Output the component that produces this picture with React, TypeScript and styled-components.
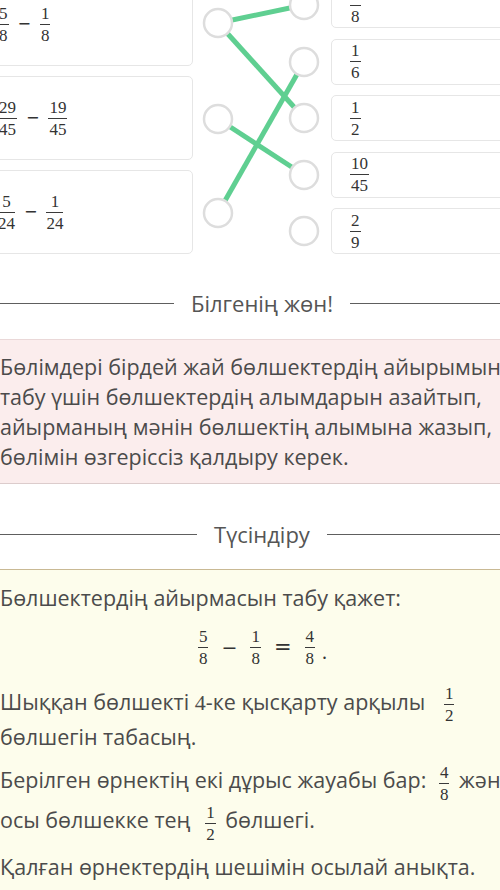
import React from 'react';
import styled, { createGlobalStyle } from 'styled-components';

const GlobalStyle = createGlobalStyle`
  html, body {
    margin: 0;
    padding: 0;
    background: #fff;
    overflow: hidden;
  }
  body {
    font-family: "Open Sans", "Noto Sans", sans-serif;
    color: #4b4b4b;
  }
`;

const Page = styled.div`
  width: 564px;
  margin: -18px 0 0 -20px;
`;

const Matching = styled.div`
  display: grid;
  grid-template-columns: 213px 138px 213px;
`;

const Column = styled.div<{ $gap: number }>`
  display: flex;
  flex-direction: column;
  gap: ${p => p.$gap}px;
`;

const Card = styled.div<{ $h: number; $pad: number }>`
  box-sizing: border-box;
  height: ${p => p.$h}px;
  padding-left: ${p => p.$pad}px;
  display: flex;
  align-items: center;
  gap: 8px;
  background: #fff;
  border: 1px solid #e6e6e6;
  border-radius: 5px;
`;

const FracBox = styled.span`
  display: inline-flex;
  flex-direction: column;
  align-items: center;
  vertical-align: middle;
  font-family: "Liberation Serif", "DejaVu Serif", serif;
  font-size: 17px;
  line-height: 1;
  color: #333;
  padding: 0 1px;
`;

const Num = styled.span<{ $space: number }>`
  padding: 0 1px ${p => p.$space}px;
`;

const Den = styled.span<{ $space: number }>`
  align-self: stretch;
  text-align: center;
  border-top: 1px solid #3a3a3a;
  padding-top: ${p => p.$space}px;
`;

const Op = styled.span<{ $size: number }>`
  font-family: "DejaVu Sans", sans-serif;
  font-size: ${p => p.$size}px;
  line-height: 1;
  color: #333;
`;

const Dot = styled.span`
  font-family: "Liberation Serif", serif;
  font-size: 20px;
  color: #333;
  margin-left: -6px;
  align-self: flex-end;
  line-height: 30px;
`;

function Frac({ n, d, space = 2 }: { n: string; d: string; space?: number }) {
  return (
    <FracBox>
      <Num $space={space}>{n}</Num>
      <Den $space={space}>{d}</Den>
    </FracBox>
  );
}

const Divider = styled.div<{ $mt: number }>`
  display: flex;
  align-items: center;
  gap: 17px;
  margin-top: ${p => p.$mt}px;
  font-size: 22px;
  line-height: 28px;
  color: #555;

  &::before, &::after {
    content: '';
    flex: 1;
    border-top: 1.5px solid #5e5e5e;
  }
`;

const Note = styled.div`
  margin-top: 22px;
  padding: 12px 20px 11px;
  background: #fbeded;
  border-top: 1px solid #ead8d8;
  border-bottom: 1px solid #dccccc;
  font-size: 21.5px;
  line-height: 30px;
  white-space: nowrap;
`;

const Explain = styled.div`
  margin-top: 21px;
  padding: 13px 20px 40px;
  background: #fdfdec;
  border-top: 1px solid #c9b994;
  font-size: 21.5px;
  white-space: nowrap;
`;

const Para = styled.p<{ $lh: number; $mt: number }>`
  margin: ${p => p.$mt}px 0 0;
  line-height: ${p => p.$lh}px;
`;

const Equation = styled.div`
  display: flex;
  justify-content: center;
  align-items: center;
  gap: 12px;
  margin-top: 15px;
  height: 39px;
`;

const MathDigit = styled.span`
  font-family: "Liberation Serif", "DejaVu Serif", serif;
  font-size: 22px;
`;

const InlineFrac = styled.span<{ $ml?: number }>`
  display: inline-block;
  margin: -10px 3px -10px ${p => p.$ml ?? 6}px;
  vertical-align: middle;
`;

const leftItems = [
  ['5', '8', '1', '8'],
  ['29', '45', '19', '45'],
  ['5', '24', '1', '24'],
];

const rightItems = [
  ['1', '8'],
  ['1', '6'],
  ['1', '2'],
  ['10', '45'],
  ['2', '9'],
];

const leftDots = [41, 137, 231];
const rightDots = [23, 80, 136, 193, 249];
const links: [number, number][] = [
  [0, 0],
  [0, 2],
  [1, 3],
  [2, 1],
];

function Connectors() {
  return (
    <svg width="138" height="272" viewBox="0 0 138 272">
      {links.map(([l, r], i) => (
        <line
          key={i}
          x1={25}
          y1={leftDots[l]}
          x2={111}
          y2={rightDots[r]}
          stroke="#5fcf91"
          strokeWidth={5}
        />
      ))}
      {leftDots.map((y, i) => (
        <circle key={'l' + i} cx={25} cy={y} r={14} fill="#fff" stroke="#dddddd" strokeWidth={2.5} />
      ))}
      {rightDots.map((y, i) => (
        <circle key={'r' + i} cx={111} cy={y} r={14} fill="#fff" stroke="#dddddd" strokeWidth={2.5} />
      ))}
    </svg>
  );
}

export default function App() {
  return (
    <>
      <GlobalStyle />
      <Page>
        <Matching>
          <Column $gap={10}>
            {leftItems.map(([a, b, c, d], i) => (
              <Card key={i} $h={84} $pad={16}>
                <Frac n={a} d={b} />
                <Op $size={16}>−</Op>
                <Frac n={c} d={d} />
              </Card>
            ))}
          </Column>
          <Connectors />
          <Column $gap={10.5}>
            {rightItems.map(([n, d], i) => (
              <Card key={i} $h={46} $pad={17}>
                <Frac n={n} d={d} />
              </Card>
            ))}
          </Column>
        </Matching>

        <Divider $mt={35}>Білгенің жөн!</Divider>
        <Note>
          Бөлімдері бірдей жай бөлшектердің айырымын
          <br />
          табу үшін бөлшектердің алымдарын азайтып,
          <br />
          айырманың мәнін бөлшектің алымына жазып,
          <br />
          бөлімін өзгеріссіз қалдыру керек.
        </Note>

        <Divider $mt={36}>Түсіндіру</Divider>
        <Explain>
          <Para $lh={30} $mt={0}>Бөлшектердің айырмасын табу қажет:</Para>
          <Equation>
            <Frac n="5" d="8" />
            <Op $size={19}>−</Op>
            <Frac n="1" d="8" />
            <Op $size={21}>=</Op>
            <Frac n="4" d="8" />
            <Dot>.</Dot>
          </Equation>
          <Para $lh={34} $mt={18}>
            Шыққан бөлшекті <MathDigit>4</MathDigit>-ке қысқарту арқылы{' '}
            <InlineFrac $ml={12}><Frac n="1" d="2" /></InlineFrac>
            <br />
            бөлшегін табасың.
          </Para>
          <Para $lh={40} $mt={6}>
            Берілген өрнектің екі дұрыс жауабы бар:{' '}
            <InlineFrac><Frac n="4" d="8" /></InlineFrac> және
            <br />
            осы бөлшекке тең{' '}
            <InlineFrac $ml={8}><Frac n="1" d="2" /></InlineFrac> бөлшегі.
          </Para>
          <Para $lh={34} $mt={10}>Қалған өрнектердің шешімін осылай анықта.</Para>
        </Explain>
      </Page>
    </>
  );
}
